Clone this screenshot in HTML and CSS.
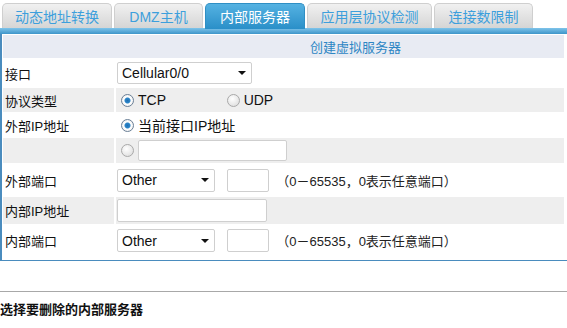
FILE: index.html
```html
<!DOCTYPE html>
<html lang="zh-CN">

<head>
    <meta charset="UTF-8">
    <title>内部服务器</title>
    <link rel="stylesheet" href="styles.css">
</head>

<body>
    <div class="page">
        <div class="tabs">
            <div class="tab" style="width: 110px">动态地址转换</div>
            <div class="tab" style="width: 89px">DMZ主机</div>
            <div class="tab active" style="width: 100px">内部服务器</div>
            <div class="tab" style="width: 125px">应用层协议检测</div>
            <div class="tab" style="width: 99px">连接数限制</div>
        </div>
        <div class="tab-bar"></div>

        <div class="panel">
            <table class="form">
                <tr class="head">
                    <td colspan="2">创建虚拟服务器</td>
                </tr>
                <tr class="r1">
                    <td class="label">接口</td>
                    <td><select class="sel wide"><option>Cellular0/0</option></select></td>
                </tr>
                <tr class="r2 alt">
                    <td class="label">协议类型</td>
                    <td>
                        <label class="opt"><input type="radio" name="proto" checked>TCP</label>
                        <label class="opt udp"><input type="radio" name="proto">UDP</label>
                    </td>
                </tr>
                <tr class="r3">
                    <td class="label">外部IP地址</td>
                    <td><label class="opt"><input type="radio" name="ext" checked>当前接口IP地址</label></td>
                </tr>
                <tr class="r4 alt">
                    <td class="label"></td>
                    <td><label class="opt"><input type="radio" name="ext"></label><input type="text" class="txt ip"></td>
                </tr>
                <tr class="r5">
                    <td class="label">外部端口</td>
                    <td>
                        <select class="sel port"><option>Other</option></select>
                        <input type="text" class="txt num">
                        <span class="hint">（0－65535，0表示任意端口）</span>
                    </td>
                </tr>
                <tr class="r6 alt">
                    <td class="label">内部IP地址</td>
                    <td><input type="text" class="txt inner"></td>
                </tr>
                <tr class="r7">
                    <td class="label">内部端口</td>
                    <td>
                        <select class="sel port"><option>Other</option></select>
                        <input type="text" class="txt num">
                        <span class="hint">（0－65535，0表示任意端口）</span>
                    </td>
                </tr>
            </table>
        </div>

        <div class="section">
            <h3>选择要删除的内部服务器</h3>
        </div>
    </div>
</body>

</html>
```

FILE: styles.css
```css
html,
body {
    margin: 0;
    padding: 0;
    overflow: hidden;
    background: white;
}

body {
    font-family: "Liberation Sans", "Noto Sans CJK SC", sans-serif;
    font-size: 13px;
    color: #111;
}

.tabs {
    display: flex;
    gap: 2px;
    padding: 3px 0 0 2px;
    height: 25px;
}

.tab {
    box-sizing: border-box;
    height: 25px;
    border: 1px solid #cfcfcf;
    border-bottom: none;
    border-radius: 5px 5px 0 0;
    background: linear-gradient(#f1f1f1, #d5d5d5);
    color: #3d9fdc;
    font-size: 14px;
    text-align: center;
    line-height: 26px;
}

.tab.active {
    height: 26px;
    border-color: #2f8fc4;
    background: linear-gradient(#55b2e2, #2a8fc8);
    color: white;
}

.tab-bar {
    height: 6px;
    background: linear-gradient(#7fc4ea, #3d95c9);
}

.panel {
    border-left: 2px solid #4a8cbe;
    border-bottom: 1px solid #4a8cbe;
    padding-bottom: 3px;
}

.form {
    width: 100%;
    border-collapse: separate;
    border-spacing: 2px 1px;
    margin-left: -1px;
}

.form td {
    padding: 0;
    vertical-align: middle;
}

.form .head td {
    height: 23px;
    padding-left: 307px;
    background: #e8ebf3;
    color: #2d86c4;
    font-size: 13px;
}

.form .label {
    width: 111px;
    padding-left: 2px;
    box-sizing: border-box;
}

.alt td {
    background: #eeeeee;
}

.r1 td { height: 28px; }
.r2 td { height: 24px; }
.r3 td { height: 24px; }
.r4 td { height: 25px; }
.r5 td { height: 32px; }
.r6 td { height: 27px; }
.r7 td { height: 31px; }

.sel {
    appearance: none;
    box-sizing: border-box;
    height: 22px;
    margin: 0 0 0 1px;
    padding: 0 16px 0 4px;
    border: 1px solid #cfcfcf;
    border-radius: 2px;
    background: white url("data:image/svg+xml,%3Csvg xmlns='http://www.w3.org/2000/svg' width='8' height='4'%3E%3Cpath d='M0 0h8L4 4z' fill='%23111'/%3E%3C/svg%3E") no-repeat right 5px center;
    font-family: "Liberation Sans", sans-serif;
    font-size: 14px;
    color: #111;
    vertical-align: middle;
}

.sel.wide {
    width: 135px;
}

.sel.port {
    width: 98px;
    height: 23px;
}

.txt {
    box-sizing: border-box;
    height: 22px;
    margin: 0;
    border: 1px solid #cfcfcf;
    border-radius: 2px;
    vertical-align: middle;
}

.txt.ip {
    width: 149px;
    height: 21px;
}

.txt.num {
    width: 42px;
    height: 23px;
    margin-left: 8px;
}

.txt.inner {
    width: 150px;
    height: 23px;
    margin-left: 1px;
}

.hint {
    margin-left: 4px;
    font-size: 13px;
    color: #222;
    vertical-align: middle;
}

.opt {
    display: inline-flex;
    align-items: center;
    margin-left: 5px;
    font-size: 14px;
    vertical-align: middle;
}

.opt.udp {
    margin-left: 57px;
}

.opt input {
    appearance: none;
    box-sizing: border-box;
    width: 13px;
    height: 13px;
    margin: 0 4px 0 0;
    border: 1px solid #a9a9a9;
    border-radius: 50%;
    background: radial-gradient(circle at 40% 35%, #ffffff, #d8d8d8);
}

.opt input:checked {
    border-color: #6a7f96;
    background: radial-gradient(circle, #1f6fb2 0, #2c86c9 2.5px, #ffffff 3.5px, #e4e4e4 100%);
}

.section {
    margin-top: 30px;
    border-top: 1px solid #a8a8a8;
}

.section h3 {
    margin: 7px 0 0;
    font-size: 13px;
    font-weight: bold;
    color: #111;
}
```
